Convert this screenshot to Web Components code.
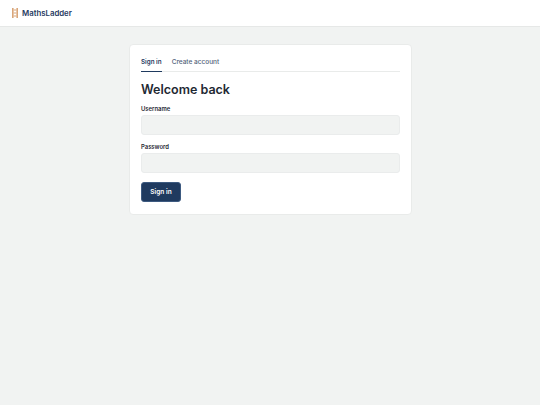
<!DOCTYPE html>
<html><head><meta charset="utf-8"><style>
html,body{margin:0;padding:0;height:100%}
body{background:#f1f3f2;font-family:"Inter","Liberation Sans",sans-serif;color:#1f2933}
</style></head><body>
<app-header></app-header>
<main-area><login-card></login-card></main-area>
<script>
function def(name, html){customElements.define(name,class extends HTMLElement{constructor(){super();this.attachShadow({mode:'open'}).innerHTML=html}})}
def('app-header',`<style>:host{display:flex;align-items:center;gap:4px;height:26px;box-sizing:content-box;background:#fff;border-bottom:1px solid #e6e8e7;padding-left:12px}
svg{display:block}
span{font:600 7.8px "Inter","Liberation Sans",sans-serif;color:#1f3a5f;letter-spacing:0}</style>
<svg width="6" height="10" viewBox="0 0 6 10"><g fill="#d9a679"><rect x="0" y="0" width="1.6" height="10"/><rect x="4.4" y="0" width="1.6" height="10"/><rect x="1.6" y="1.5" width="2.8" height="1"/><rect x="1.6" y="4.5" width="2.8" height="1"/><rect x="1.6" y="7.5" width="2.8" height="1"/></g></svg><span>MathsLadder</span>`);
def('main-area',`<style>:host{display:flex;justify-content:center;padding:17px 0 0 1px}</style><slot></slot>`);
def('tab-bar',`<style>:host{display:flex;gap:10px;height:21px;border-bottom:1px solid #e9ebea;box-sizing:content-box}
span{font:500 6.5px/24px "Inter","Liberation Sans",sans-serif;color:#52627a;height:21px;box-sizing:border-box}
.on{font-weight:600;font-size:6.3px;color:#1f3a5f;border-bottom:1px solid #1f3a5f;height:22px}</style><span class="on">Sign in</span><span>Create account</span>`);
def('form-field',`<style>:host{display:block;margin-bottom:7px}
label{display:block;font:600 5.9px/10px "Inter","Liberation Sans",sans-serif;color:#1f2933;margin-bottom:1px}
div{height:20px;box-sizing:border-box;background:#f1f3f2;border:1px solid #eaecec;border-radius:3px}</style><label><slot></slot></label><div></div>`);
def('login-card',`<style>:host{display:block;box-sizing:border-box;width:283px;height:171px;background:#fff;border:1px solid #e9ebea;border-radius:4px;padding:5px 11px 0}
h1{font:600 12.5px/20px "Inter","Liberation Sans",sans-serif;color:#1f2933;margin:8px 0 4px}
button{display:block;width:40px;height:20px;margin-top:9px;background:#1f3a5f;color:#fff;border:1px solid #3d5a80;border-radius:3px;padding:0;font:600 6.5px "Inter","Liberation Sans",sans-serif}</style>
<tab-bar></tab-bar><h1>Welcome back</h1><form-field>Username</form-field><form-field>Password</form-field><button>Sign in</button>`);
</script></body></html>
